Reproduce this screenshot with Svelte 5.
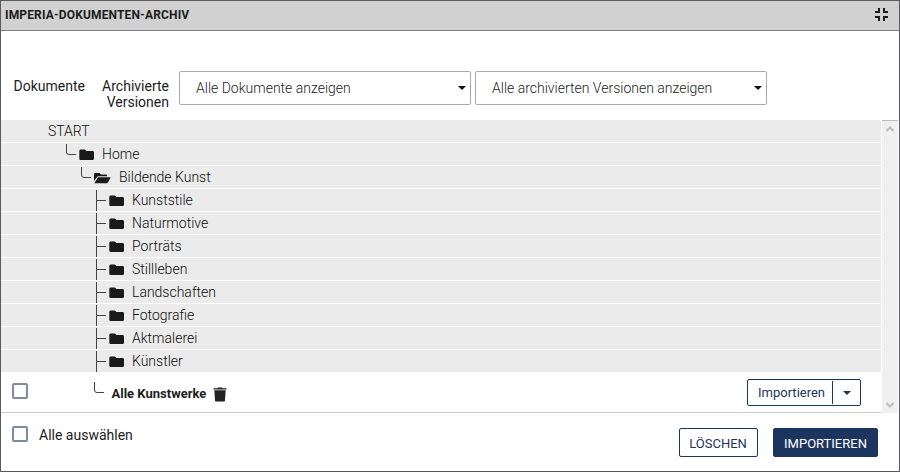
<script>
  const folders = [
    { name: 'START', level: 'root' },
    { name: 'Home', level: 'one' },
    { name: 'Bildende Kunst', level: 'two', open: true },
    ...['Kunststile', 'Naturmotive', 'Porträts', 'Stillleben', 'Landschaften', 'Fotografie', 'Aktmalerei', 'Künstler'].map(
      (name) => ({ name, level: 'three' })
    )
  ];
  const filters = ['Alle Dokumente anzeigen', 'Alle archivierten Versionen anzeigen'];
</script>

<div class="window">
  <header>
    <h1>IMPERIA-DOKUMENTEN-ARCHIV</h1>
    <svg width="14" height="14" viewBox="0 0 14 14" fill="none" stroke="#1c1c1c" stroke-width="2">
      <path d="M0 4H4V0M13 4H9V0M0 9H4V13M13 9H9V13" />
    </svg>
  </header>

  <div class="filters">
    <span class="label docs">Dokumente</span>
    <span class="label versions">Archivierte<br />Versionen</span>
    {#each filters as filter}
      <div class="select">
        <span>{filter}</span>
        <svg width="8" height="4" viewBox="0 0 8 4"><path d="M0 0H8L4 4Z" fill="#111" /></svg>
      </div>
    {/each}
  </div>

  <main>
    <div class="tree">
      {#each folders as folder}
        <div class="row {folder.level}">
          {#if folder.level !== 'root'}
            <svg class="branch" width="11" height="22" viewBox="0 0 11 22" fill="none" stroke="#444">
              {#if folder.level === 'three'}
                <path d="M1.5 1V22M1.5 11.5H11" />
              {:else}
                <path d="M1.5 1V9Q1.5 11.5 4 11.5H11" />
              {/if}
            </svg>
            {#if folder.open}
              <svg class="icon" width="17" height="12" viewBox="0 0 17 12" fill="#1a1a1a">
                <path d="M0 9V2Q0 1 1 1H5.5L7 2.5H12Q13 2.5 13 3.5V4.3H4.4Q3.3 4.3 2.8 5.2Z" />
                <path d="M.6 10.7L3.6 5.9Q3.9 5.3 4.6 5.3H16Q16.8 5.3 16.4 6L13.8 10.6Q13.5 11.2 12.8 11.2H1Q.3 11.2 .6 10.7Z" />
              </svg>
            {:else}
              <svg class="icon" width="15" height="12" viewBox="0 0 15 12" fill="#1a1a1a">
                <path d="M.3 2Q.3 .5 1.6 .5H5.8L7.6 2H13.6Q15 2 15 3.4V9.8Q15 11 13.6 11H1.6Q.3 11 .3 9.8Z" />
              </svg>
            {/if}
          {/if}
          <span>{folder.name}</span>
        </div>
      {/each}
      <div class="document">
        <i class="checkbox"></i>
        <svg class="leaf" width="11" height="13" viewBox="0 0 11 13" fill="none" stroke="#444">
          <path d="M.5 0V8Q.5 10.5 3 10.5H10" />
        </svg>
        <b>Alle Kunstwerke</b>
        <svg class="trash" width="14" height="15" viewBox="0 0 14 15" fill="#222">
          <path d="M.5 1.2H4.3L5 .5H9L9.7 1.2H13.5V2.5H.5Z" />
          <path d="M1.3 3.3H12.7L12 13.3Q11.9 14.5 10.7 14.5H3.3Q2.1 14.5 2 13.3Z" />
        </svg>
        <div class="split">
          <span>Importieren</span>
          <i></i>
          <svg width="8" height="4" viewBox="0 0 8 4"><path d="M0 0H8L4 4Z" fill="#1c355e" /></svg>
        </div>
      </div>
    </div>
    <div class="scrollbar">
      <svg width="8" height="6" viewBox="0 0 8 6"><path d="M.5 5L4 1.5L7.5 5" /></svg>
      <svg width="8" height="6" viewBox="0 0 8 6"><path d="M.5 1L4 4.5L7.5 1" /></svg>
    </div>
  </main>

  <footer>
    <i class="checkbox"></i>
    <span>Alle auswählen</span>
    <button class="delete">LÖSCHEN</button>
    <button class="import">IMPORTIEREN</button>
  </footer>
</div>

<style>
  .window {
    box-sizing: border-box;
    width: 900px;
    height: 472px;
    border: 1px solid #5a5a5c;
    background: #fff;
    color: #1c1c1c;
    font: 14px/16px Roboto, 'Liberation Sans', sans-serif;
    display: flex;
    flex-direction: column;
    overflow: hidden;
    white-space: nowrap;
  }
  svg { display: block; flex: none; }
  header {
    box-sizing: border-box;
    height: 30px;
    flex: none;
    background: #d1d1d1;
    border-bottom: 1px solid #7e7e7e;
    display: flex;
    align-items: center;
    justify-content: space-between;
    padding: 0 10px 2px 4px;
  }
  h1 { margin: 0; font-size: 12px; line-height: 16px; font-weight: 700; letter-spacing: 0.15px; }
  .filters { height: 89px; flex: none; display: flex; align-items: flex-start; }
  .label { margin-top: 47px; text-align: right; }
  .docs { width: 84px; }
  .versions { width: 84px; margin-right: 9px; }
  .select {
    box-sizing: border-box;
    width: 292px;
    height: 34px;
    margin: 40px 4px 0 0;
    border: 1px solid #a9a9a9;
    border-radius: 2px;
    display: flex;
    align-items: center;
    justify-content: space-between;
    padding: 0 5px 0 16px;
    color: #222;
    font-weight: 300;
  }
  .versions + .select { margin-left: 1px; }
  .select svg { margin-right: -0.5px; }
  main { display: flex; height: 293px; flex: none; }
  .tree { width: 880px; border-bottom: 1px solid #ccc; display: flex; flex-direction: column; }
  .row {
    height: 22px;
    flex: none;
    border-bottom: 1px solid #fff;
    background: #ebebeb;
    color: #0c0c0c;
    display: flex;
    align-items: center;
    font-weight: 300;
  }
  .icon { margin: 1px 8px 0 3px; }
  .root { padding-left: 47px; }
  .one { padding-left: 64px; }
  .two { padding-left: 79px; }
  .three { padding-left: 94px; }
  .document { flex: 1; display: flex; align-items: center; padding: 0 20px 0 11px; }
  .checkbox {
    box-sizing: border-box;
    width: 16px;
    height: 16px;
    border: 2px solid #7b8ba3;
    border-radius: 2px;
    flex: none;
  }
  .document .checkbox { margin-bottom: 3px; }
  .leaf { margin: 0 6.5px 8px 66px; }
  b { font-size: 13px; font-weight: 700; margin-top: 3px; }
  .trash { margin: 3px 0 0 6.5px; }
  .split {
    box-sizing: border-box;
    margin-left: auto;
    width: 114px;
    height: 27px;
    border: 1px solid #1c355e;
    border-radius: 2px;
    color: #1c355e;
    display: flex;
    align-items: center;
    font-size: 13px;
    padding-left: 10px;
  }
  .split i { width: 1px; height: 23px; background: #1c355e; margin: 0 10px 0 auto; }
  .split svg { margin-right: 9px; }
  .scrollbar {
    box-sizing: border-box;
    margin-left: 1px;
    width: 16px;
    background: #f0f0f0;
    border-top: 1px solid #bbb;
    display: flex;
    flex-direction: column;
    align-items: center;
    justify-content: space-between;
    padding: 5px 0 5px;
  }
  .scrollbar path { fill: none; stroke: #bcbcbc; stroke-width: 2; }
  footer { flex: 1; display: flex; align-items: flex-start; padding: 0 21px 0 11px; }
  footer .checkbox { margin: 13px 11px 0 0; }
  footer span { margin-top: 14px; }
  button {
    box-sizing: border-box;
    height: 29px;
    margin: 15px 0 0;
    padding: 0;
    border: 1px solid #1c355e;
    border-radius: 2px;
    font: 13px/29px Roboto, 'Liberation Sans', sans-serif;
  }
  .delete { width: 79px; margin-left: auto; padding-right: 1px; background: #fff; color: #1c355e; }
  .import { width: 105px; margin-left: 15px; background: #1c355e; color: #fff; }
</style>
